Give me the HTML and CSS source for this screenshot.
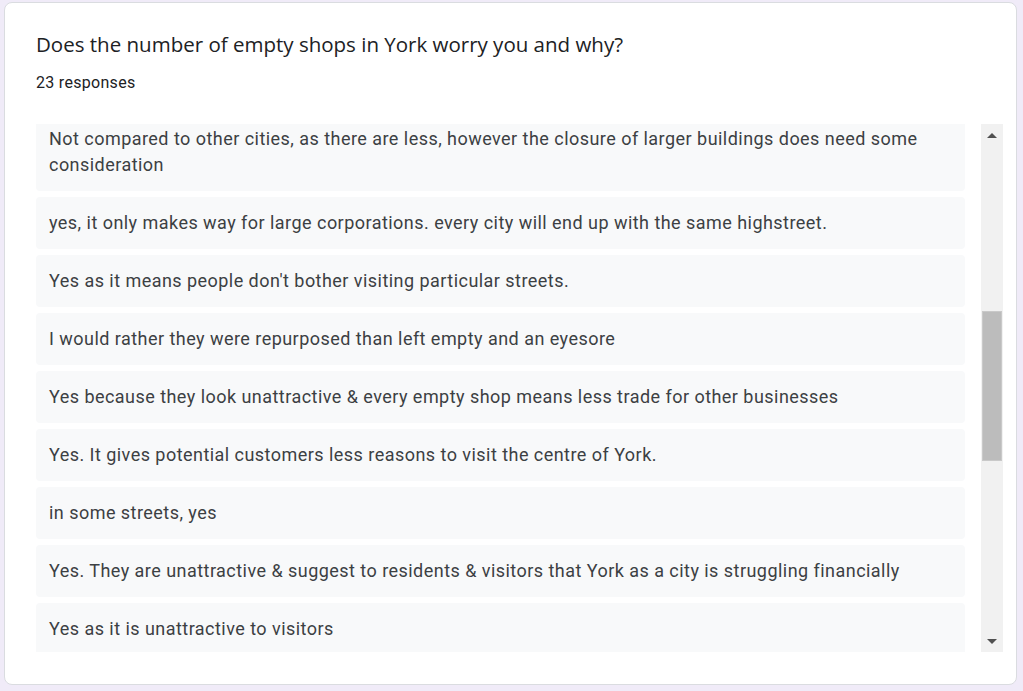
FILE: index.html
```html
<!DOCTYPE html>
<html lang="en">
<head>
<meta charset="utf-8">
<title>Responses</title>
<link rel="stylesheet" href="styles.css">
</head>
<body>
<section class="card">
  <header class="head">
    <h1 class="title">Does the number of empty shops in York worry you and why?</h1>
    <div class="count">23 responses</div>
  </header>
  <div class="body">
    <div class="viewport">
      <ul class="list">
        <li class="item">Not compared to other cities, as there are less, however the closure of larger buildings does need some consideration</li>
        <li class="item">yes, it only makes way for large corporations. every city will end up with the same highstreet.</li>
        <li class="item">Yes as it means people don't bother visiting particular streets.</li>
        <li class="item">I would rather they were repurposed than left empty and an eyesore</li>
        <li class="item">Yes because they look unattractive &amp; every empty shop means less trade for other businesses</li>
        <li class="item">Yes. It gives potential customers less reasons to visit the centre of York.</li>
        <li class="item">in some streets, yes</li>
        <li class="item">Yes. They are unattractive &amp; suggest to residents &amp; visitors that York as a city is struggling financially</li>
        <li class="item">Yes as it is unattractive to visitors</li>
      </ul>
    </div>
    <div class="scrollbar">
      <div class="arrow up"></div>
      <div class="track">
        <div class="thumb"></div>
      </div>
      <div class="arrow down"></div>
    </div>
  </div>
</section>
</body>
</html>
```
FILE: styles.css
```css
html, body {
  margin: 0;
  padding: 0;
}
body {
  background: #f0ebf8;
  padding: 2px 6px 0 4px;
  height: 691px;
  box-sizing: border-box;
  overflow: hidden;
}
.card {
  background: #ffffff;
  border: 1px solid #dadce0;
  border-radius: 8px;
  height: 683px;
  box-sizing: border-box;
  padding: 27px 13px 0 31px;
}
.title {
  margin: 0;
  font-family: "Open Sans", sans-serif;
  font-weight: 400;
  font-size: 20.5px;
  line-height: 28px;
  color: #202124;
}
.count {
  margin-top: 13px;
  font-family: Roboto, sans-serif;
  font-size: 16px;
  line-height: 24px;
  letter-spacing: 0.3px;
  color: #202124;
}
.body {
  margin-top: 29px;
  display: flex;
  gap: 16px;
  height: 528px;
}
.viewport {
  flex: 1;
  overflow: hidden;
}
.list {
  list-style: none;
  margin: -11px 0 0;
  padding: 0;
  display: flex;
  flex-direction: column;
  gap: 6px;
}
.item {
  background: #f8f9fa;
  border-radius: 4px;
  padding: 13px 13px;
  font-family: Roboto, sans-serif;
  font-size: 18px;
  line-height: 26px;
  letter-spacing: 0.46px;
  color: #3c4043;
}
.scrollbar {
  width: 22px;
  background: #f1f1f1;
  display: flex;
  flex-direction: column;
}
.arrow {
  height: 22px;
  display: flex;
  align-items: center;
  justify-content: center;
}
.arrow::before {
  content: "";
  border-left: 5px solid transparent;
  border-right: 5px solid transparent;
}
.arrow.up::before {
  border-bottom: 5px solid #505050;
}
.arrow.down::before {
  border-top: 5px solid #505050;
}
.track {
  flex: 1;
  padding-top: 165px;
}
.thumb {
  margin: 0 1px;
  height: 150px;
  background: #bcbcbc;
  border: 1px solid #c9c9c9;
  box-sizing: border-box;
}
```
